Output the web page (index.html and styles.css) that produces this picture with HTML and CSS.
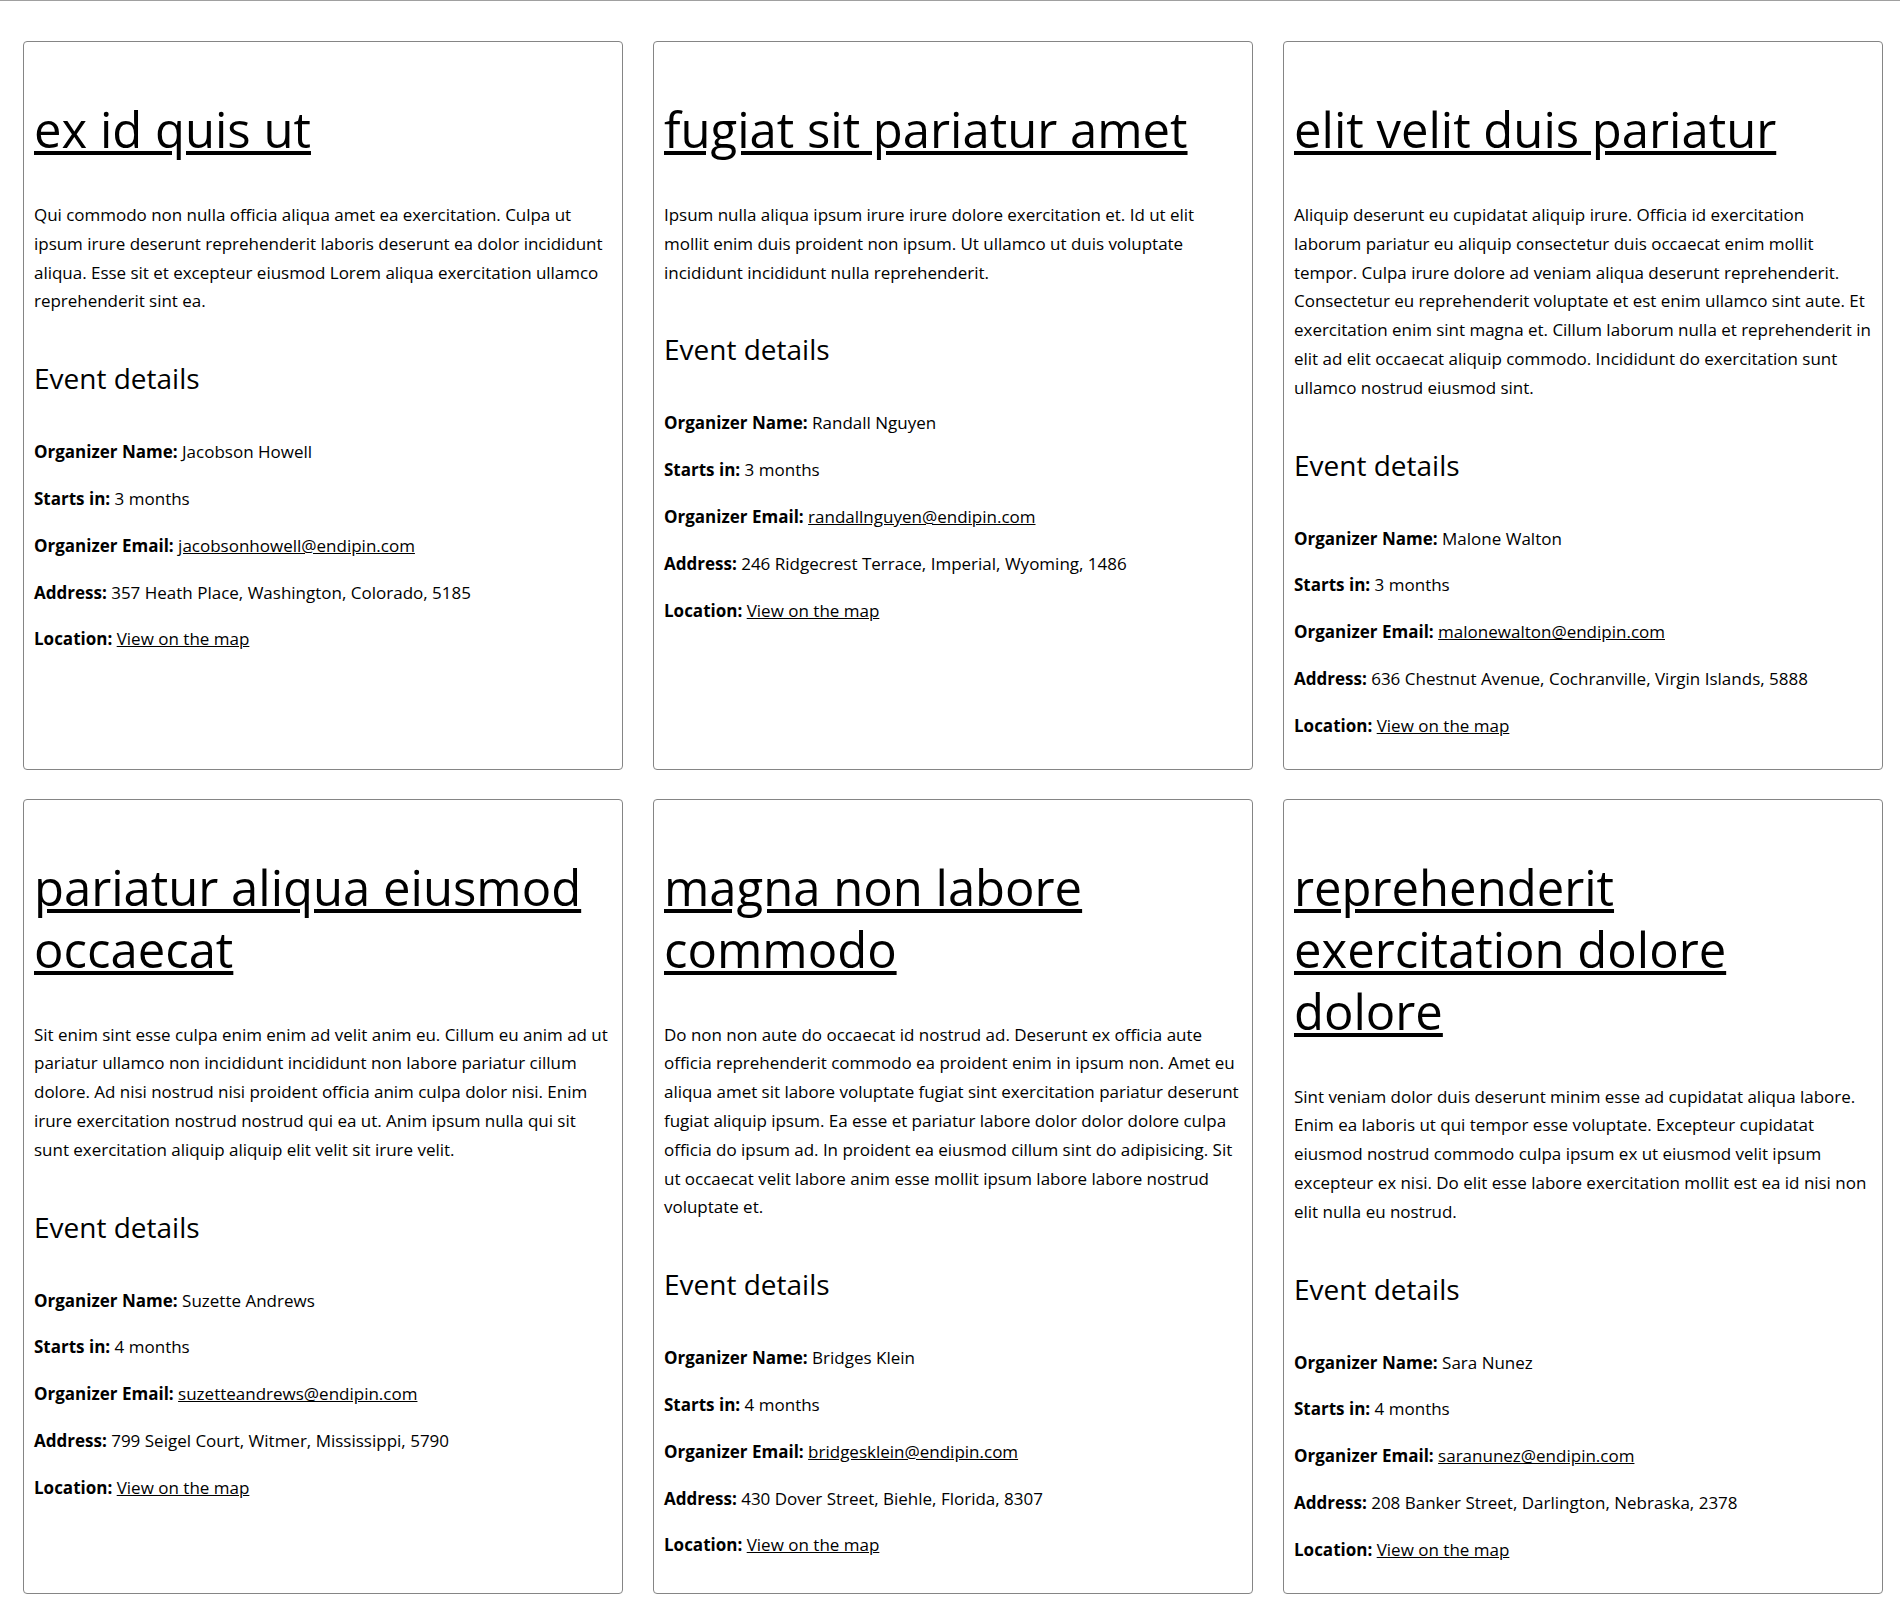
FILE: index.html
```html
<!DOCTYPE html>
<html lang="en">
<head>
<meta charset="utf-8">
<title>Events</title>
<link rel="stylesheet" href="styles.css">
</head>
<body>
<div class="page">
  <div class="grid">
    <div class="card">
      <h1 class="title"><a href="#">ex id quis ut</a></h1>
      <p class="desc">Qui commodo non nulla officia aliqua amet ea exercitation. Culpa ut ipsum irure deserunt reprehenderit laboris deserunt ea dolor incididunt aliqua. Esse sit et excepteur eiusmod Lorem aliqua exercitation ullamco reprehenderit sint ea.</p>
      <h2 class="sub">Event details</h2>
      <p class="row"><b>Organizer Name:</b> Jacobson Howell</p>
      <p class="row"><b>Starts in:</b> 3 months</p>
      <p class="row"><b>Organizer Email:</b> <a href="#">jacobsonhowell@endipin.com</a></p>
      <p class="row"><b>Address:</b> 357 Heath Place, Washington, Colorado, 5185</p>
      <p class="row"><b>Location:</b> <a href="#">View on the map</a></p>
    </div>
    <div class="card">
      <h1 class="title"><a href="#">fugiat sit pariatur amet</a></h1>
      <p class="desc">Ipsum nulla aliqua ipsum irure irure dolore exercitation et. Id ut elit mollit enim duis proident non ipsum. Ut ullamco ut duis voluptate incididunt incididunt nulla reprehenderit.</p>
      <h2 class="sub">Event details</h2>
      <p class="row"><b>Organizer Name:</b> Randall Nguyen</p>
      <p class="row"><b>Starts in:</b> 3 months</p>
      <p class="row"><b>Organizer Email:</b> <a href="#">randallnguyen@endipin.com</a></p>
      <p class="row"><b>Address:</b> 246 Ridgecrest Terrace, Imperial, Wyoming, 1486</p>
      <p class="row"><b>Location:</b> <a href="#">View on the map</a></p>
    </div>
    <div class="card">
      <h1 class="title"><a href="#">elit velit duis pariatur</a></h1>
      <p class="desc">Aliquip deserunt eu cupidatat aliquip irure. Officia id exercitation laborum pariatur eu aliquip consectetur duis occaecat enim mollit tempor. Culpa irure dolore ad veniam aliqua deserunt reprehenderit. Consectetur eu reprehenderit voluptate et est enim ullamco sint aute. Et exercitation enim sint magna et. Cillum laborum nulla et reprehenderit in elit ad elit occaecat aliquip commodo. Incididunt do exercitation sunt ullamco nostrud eiusmod sint.</p>
      <h2 class="sub">Event details</h2>
      <p class="row"><b>Organizer Name:</b> Malone Walton</p>
      <p class="row"><b>Starts in:</b> 3 months</p>
      <p class="row"><b>Organizer Email:</b> <a href="#">malonewalton@endipin.com</a></p>
      <p class="row"><b>Address:</b> 636 Chestnut Avenue, Cochranville, Virgin Islands, 5888</p>
      <p class="row"><b>Location:</b> <a href="#">View on the map</a></p>
    </div>
    <div class="card">
      <h1 class="title"><a href="#">pariatur aliqua eiusmod occaecat</a></h1>
      <p class="desc">Sit enim sint esse culpa enim enim ad velit anim eu. Cillum eu anim ad ut pariatur ullamco non incididunt incididunt non labore pariatur cillum dolore. Ad nisi nostrud nisi proident officia anim culpa dolor nisi. Enim irure exercitation nostrud nostrud qui ea ut. Anim ipsum nulla qui sit sunt exercitation aliquip aliquip elit velit sit irure velit.</p>
      <h2 class="sub">Event details</h2>
      <p class="row"><b>Organizer Name:</b> Suzette Andrews</p>
      <p class="row"><b>Starts in:</b> 4 months</p>
      <p class="row"><b>Organizer Email:</b> <a href="#">suzetteandrews@endipin.com</a></p>
      <p class="row"><b>Address:</b> 799 Seigel Court, Witmer, Mississippi, 5790</p>
      <p class="row"><b>Location:</b> <a href="#">View on the map</a></p>
    </div>
    <div class="card">
      <h1 class="title"><a href="#">magna non labore commodo</a></h1>
      <p class="desc">Do non non aute do occaecat id nostrud ad. Deserunt ex officia aute officia reprehenderit commodo ea proident enim in ipsum non. Amet eu aliqua amet sit labore voluptate fugiat sint exercitation pariatur deserunt fugiat aliquip ipsum. Ea esse et pariatur labore dolor dolor dolore culpa officia do ipsum ad. In proident ea eiusmod cillum sint do adipisicing. Sit ut occaecat velit labore anim esse mollit ipsum labore labore nostrud voluptate et.</p>
      <h2 class="sub">Event details</h2>
      <p class="row"><b>Organizer Name:</b> Bridges Klein</p>
      <p class="row"><b>Starts in:</b> 4 months</p>
      <p class="row"><b>Organizer Email:</b> <a href="#">bridgesklein@endipin.com</a></p>
      <p class="row"><b>Address:</b> 430 Dover Street, Biehle, Florida, 8307</p>
      <p class="row"><b>Location:</b> <a href="#">View on the map</a></p>
    </div>
    <div class="card">
      <h1 class="title"><a href="#">reprehenderit exercitation dolore dolore</a></h1>
      <p class="desc">Sint veniam dolor duis deserunt minim esse ad cupidatat aliqua labore. Enim ea laboris ut qui tempor esse voluptate. Excepteur cupidatat eiusmod nostrud commodo culpa ipsum ex ut eiusmod velit ipsum excepteur ex nisi. Do elit esse labore exercitation mollit est ea id nisi non elit nulla eu nostrud.</p>
      <h2 class="sub">Event details</h2>
      <p class="row"><b>Organizer Name:</b> Sara Nunez</p>
      <p class="row"><b>Starts in:</b> 4 months</p>
      <p class="row"><b>Organizer Email:</b> <a href="#">saranunez@endipin.com</a></p>
      <p class="row"><b>Address:</b> 208 Banker Street, Darlington, Nebraska, 2378</p>
      <p class="row"><b>Location:</b> <a href="#">View on the map</a></p>
    </div>
  </div>
</div>
</body>
</html>
```
FILE: styles.css
```css
html, body {
  margin: 0;
  padding: 0;
  background: #ffffff;
}

body {
  font-family: "Open Sans", "Noto Sans", sans-serif;
  font-size: 17px;
  color: #000000;
}

.page {
  border-top: 1px solid #a0a0a0;
  padding: 40px 17px 21px 23px;
}

.grid {
  display: grid;
  grid-template-columns: repeat(3, 600px);
  column-gap: 30px;
  row-gap: 29px;
}

.card {
  box-sizing: border-box;
  border: 1px solid #858585;
  border-radius: 4px;
  padding: 10px;
}

.card a {
  color: #000000;
  text-decoration: underline;
}

.title {
  font-size: 49px;
  font-weight: 400;
  line-height: 62px;
  margin: 46px 0 41px;
}

.desc {
  line-height: 28.8px;
  letter-spacing: -0.025px;
  margin: 0 0 45px;
}

.sub {
  font-size: 28px;
  font-weight: 400;
  line-height: 34px;
  margin: 0 0 43px;
}

.row {
  line-height: 28.8px;
  margin: 18px 0;
}

.row b {
  font-weight: 700;
}
```
